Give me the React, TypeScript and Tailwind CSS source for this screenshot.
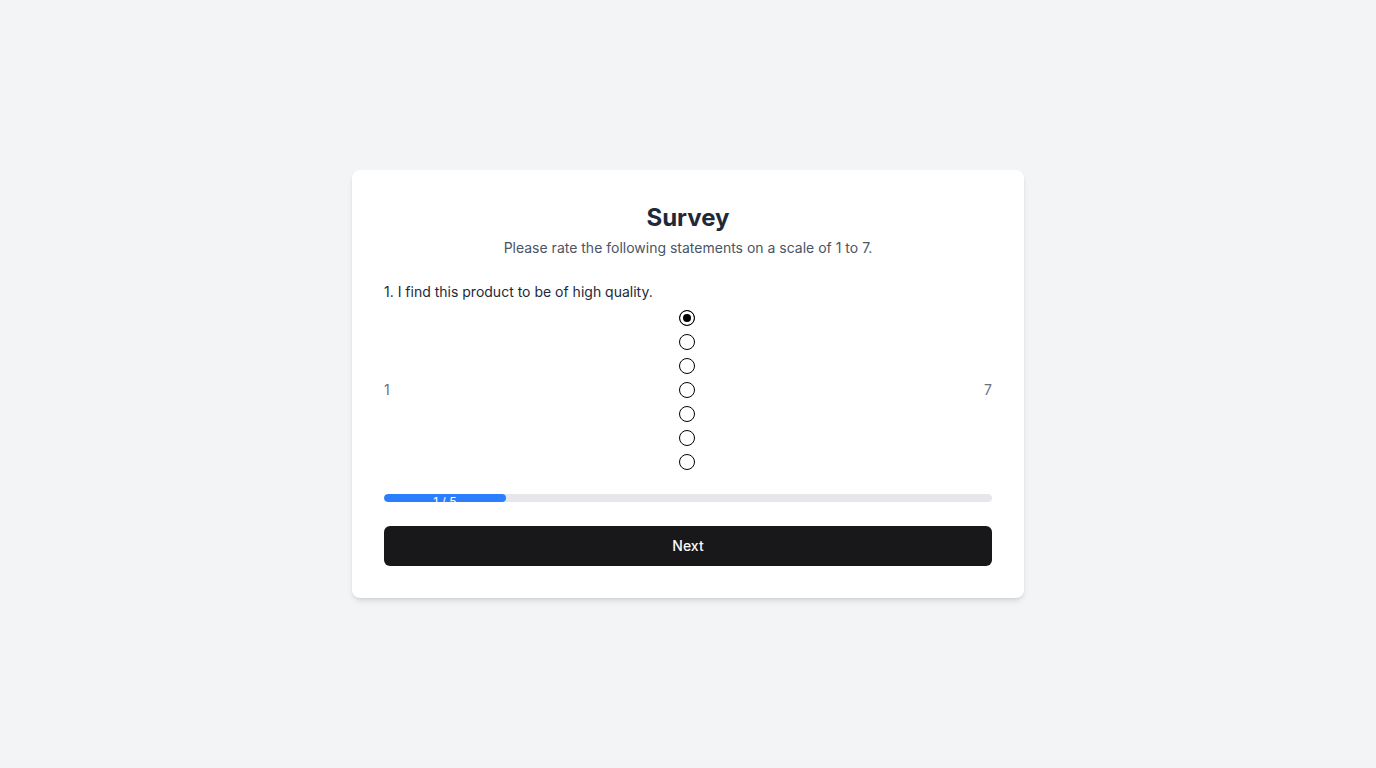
import React, { useState } from 'react';

export default function App() {
  const [value, setValue] = useState(1);
  const step = 1;
  const total = 5;

  return (
    <div className="min-h-screen bg-gray-100 flex items-center justify-center font-['Inter',sans-serif]">
      <div className="bg-white rounded-lg shadow-md p-8 w-full max-w-2xl">
        <div className="text-center mb-6">
          <h1 className="text-2xl font-bold text-gray-800">Survey</h1>
          <p className="text-sm text-gray-600 mt-1">Please rate the following statements on a scale of 1 to 7.</p>
        </div>

        <div>
          <p className="text-sm text-gray-800">1. I find this product to be of high quality.</p>
          <div className="flex items-center justify-between mt-2">
            <span className="text-sm text-gray-500">1</span>
            <div className="flex flex-col items-center gap-2">
              {[1, 2, 3, 4, 5, 6, 7].map((n) => (
                <input
                  key={n}
                  type="radio"
                  name="q1"
                  checked={value === n}
                  onChange={() => setValue(n)}
                  className="appearance-none w-4 h-4 rounded-full border border-black bg-white checked:bg-black checked:shadow-[inset_0_0_0_3px_white]"
                />
              ))}
            </div>
            <span className="text-sm text-gray-500">7</span>
          </div>
        </div>

        <div className="mt-6 h-2 w-full bg-gray-200 rounded-full overflow-hidden">
          <div
            className="h-full bg-blue-500 rounded-full text-xs leading-4 text-white text-center"
            style={{ width: `${(step / total) * 100}%` }}
          >
            {step} / {total}
          </div>
        </div>

        <button className="mt-6 w-full h-10 rounded-md bg-zinc-900 text-zinc-50 font-medium text-sm">
          Next
        </button>
      </div>
    </div>
  );
}
